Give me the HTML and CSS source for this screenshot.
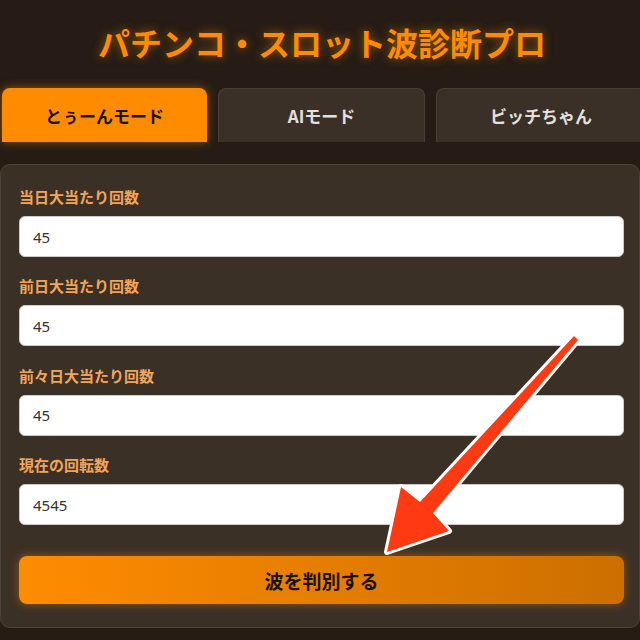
FILE: index.html
```
<!DOCTYPE html>
<html lang="ja">

<head>
    <meta charset="UTF-8">
    <meta name="viewport" content="width=device-width, initial-scale=1.0">
    <title>パチンコ・スロット波診断プロ</title>
    <link rel="stylesheet" href="styles.css">
</head>

<body>
    <section class="app">
        <!-- Title -->
        <h1 class="title">パチンコ・スロット波診断プロ</h1>

        <!-- Mode tabs -->
        <div class="tabs">
            <button class="tab active">とぅーんモード</button>
            <button class="tab">AIモード</button>
            <button class="tab">ビッチちゃん</button>
        </div>

        <!-- Input form -->
        <div class="card">
            <div class="field">
                <label class="label">当日大当たり回数</label>
                <input class="input" type="text" value="45">
            </div>
            <div class="field">
                <label class="label">前日大当たり回数</label>
                <input class="input" type="text" value="45">
            </div>
            <div class="field">
                <label class="label">前々日大当たり回数</label>
                <input class="input" type="text" value="45">
            </div>
            <div class="field">
                <label class="label">現在の回転数</label>
                <input class="input" type="text" value="4545">
            </div>
            <button class="judge">波を判別する</button>
        </div>

        <!-- Pointer arrow -->
        <svg class="arrow" width="640" height="640" viewBox="0 0 640 640">
            <polygon points="387,552 401,487 420,502 574,336 578,340 433,513 449,531"
                fill="#ff3a12" stroke="#fff" stroke-width="6" stroke-linejoin="round" paint-order="stroke" />
        </svg>
    </section>
</body>

</html>
```

FILE: styles.css
```
/* styles.css */
* {
    margin: 0;
    padding: 0;
    box-sizing: border-box;
}

body {
    width: 640px;
    height: 640px;
    overflow: hidden;
    background: #261c15;
    font-family: "Noto Sans CJK JP", "Noto Sans", sans-serif;
}

.app {
    position: relative;
    width: 640px;
    height: 640px;
    padding-top: 22px;
}

/* Title */
.title {
    text-align: center;
    font-size: 32px;
    line-height: 40px;
    font-weight: 700;
    color: #ff8c00;
    text-shadow: 0 0 10px rgba(255, 140, 0, 0.55);
    margin-bottom: 26px;
    padding-left: 4px;
}

/* Tabs */
.tabs {
    display: grid;
    grid-template-columns: 205px 207px 210px;
    column-gap: 11px;
    margin-left: 2px;
    width: 660px;
    margin-bottom: 22px;
}

.tab {
    height: 54px;
    border: 1px solid #4a3f35;
    border-bottom: none;
    border-radius: 8px 8px 0 0;
    background: #3a3027;
    color: #e4e0dc;
    font-family: inherit;
    font-size: 17px;
    font-weight: 700;
}

.tab.active {
    background: #ff8c00;
    border-color: #ff8c00;
    color: #1c1410;
    box-shadow: 0 0 10px rgba(255, 140, 0, 0.5);
}

/* Card */
.card {
    width: 640px;
    background: #3b3026;
    border: 1px solid #4d4238;
    border-radius: 10px;
    padding: 21px 15px 23px 18px;
}

.field {
    display: flex;
    flex-direction: column;
    margin-bottom: 18.4px;
}

.label {
    font-size: 15px;
    line-height: 22px;
    font-weight: 700;
    color: #f2a55a;
    margin-bottom: 8px;
}

.input {
    height: 41px;
    border: 1px solid #ccc;
    border-radius: 6px;
    background: #fff;
    padding-left: 13px;
    font-family: "Noto Sans", sans-serif;
    font-size: 15px;
    color: #333;
    outline: none;
}

.judge {
    display: block;
    width: 100%;
    height: 48px;
    margin-top: 31px;
    border: none;
    border-radius: 8px;
    background: linear-gradient(90deg, #ff8c00, #cc6f00);
    box-shadow: 0 0 10px rgba(255, 140, 0, 0.45);
    color: #1a120c;
    font-family: inherit;
    font-size: 19px;
    font-weight: 700;
}

/* Arrow overlay */
.arrow {
    position: absolute;
    left: 0;
    top: 0;
    pointer-events: none;
}
```
